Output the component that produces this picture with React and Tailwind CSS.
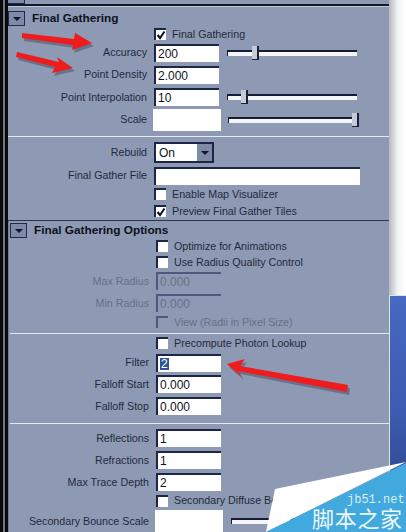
const FONT = { fontFamily: '"Liberation Sans", Arial, sans-serif' };

function Label({ children, dim }) {
  return (
    <span className={`w-[140px] shrink-0 pr-[1px] text-right whitespace-nowrap ${dim ? 'text-[#667088]' : 'text-[#232a3e]'}`}>
      {children}
    </span>
  );
}

function Field({ value, dim, selected, blank, w = 'w-[65px]' }) {
  if (blank) return <div className="w-[68px] h-[22px] -ml-[1px] bg-white shrink-0" />;
  return (
    <div className={`${w} h-[18px] flex items-center pl-[2px] text-[12px] leading-none shrink-0 border-t-2 border-l-2 border-[#1c2748] ${dim ? 'bg-[#8e9ab3] text-[#667088] border-[#4c5a7c]' : 'bg-white text-[#10131c]'}`}>
      {selected ? <span className="bg-[#2f5597] text-white px-[1px]">{value}</span> : value}
    </div>
  );
}

function Slider({ pos, w = 'w-[130px]' }) {
  return (
    <div className={`relative ${w} h-[14px] ml-[8px] shrink-0`}>
      <div className="absolute left-0 right-0 top-[4px] h-[6px] bg-[#f4f5f8] border-t-2 border-l border-[#161d33]" />
      {pos !== undefined && (
        <div className="absolute top-0 w-[7px] h-[14px] bg-[#c6cbd8] border-r-2 border-b border-[#1a2238]" style={{ left: pos }} />
      )}
    </div>
  );
}

function Row({ label, h, dim, children }) {
  return (
    <div className={`flex items-center shrink-0 ${h}`}>
      <Label dim={dim}>{label}</Label>
      <div className="w-[6px] shrink-0" />
      {children}
    </div>
  );
}

function Check({ label, checked, dim, h }) {
  return (
    <div className={`flex items-center shrink-0 ${h}`}>
      <div className="w-[146px] shrink-0" />
      <div className={`w-[12px] h-[12px] flex items-center justify-center border-t-2 border-l-2 shrink-0 ${dim ? 'border-[#4c5a7c] bg-[#8e9ab3]' : 'border-[#1c2748] bg-white'}`}>
        {checked && (
          <svg width="10" height="10" viewBox="0 0 10 10">
            <path d="M1.5 5 L4 8 L8.5 1.5" fill="none" stroke="#0b0f1a" strokeWidth="2" />
          </svg>
        )}
      </div>
      <span className={`ml-[6px] whitespace-nowrap ${dim ? 'text-[#667088]' : 'text-[#232a3e]'}`}>{label}</span>
    </div>
  );
}

function Header({ title }) {
  return (
    <div className="flex items-center shrink-0 h-[15px]">
      <div className="w-[17px] h-[15px] flex items-center justify-center bg-[#7e8aa8] border border-[#222c4a] shrink-0">
        <div className="w-0 h-0 border-l-[4px] border-r-[4px] border-t-[4px] border-l-transparent border-r-transparent border-t-[#111726]" />
      </div>
      <span className="ml-[7px] text-[11.8px] font-bold text-[#0c1120] whitespace-nowrap">{title}</span>
    </div>
  );
}

function Gap({ h }) {
  return <div className={`shrink-0 ${h}`} />;
}

function Line() {
  return <div className="shrink-0 h-[1px] bg-[#e6e9ef]" />;
}

function Arrow({ points }) {
  return (
    <svg className="absolute left-0 top-0" width="406" height="532" viewBox="0 0 406 532">
      <polygon points={points} fill="#3a4258" opacity="0.45" transform="translate(2 3)" />
      <polygon points={points} fill="#ee1c1c" />
    </svg>
  );
}

export default function App() {
  return (
    <div className="relative flex w-[406px] h-[532px] overflow-hidden bg-[#8e9ab3] text-[10.7px] leading-none" style={FONT}>
      <div className="flex w-[8px] shrink-0 bg-black">
        <div className="w-[3px] bg-[#0a0a0a]" />
        <div className="w-[2px] bg-[#6f7688]" />
        <div className="w-[3px] bg-[#0a0a0a]" />
      </div>

      <div className="w-[381px] shrink-0 flex flex-col">
        <div className="h-[4px] flex shrink-0">
          <div className="w-[17px] bg-[#7e8aa8] border-b border-r border-[#222c4a]" />
        </div>
        <div className="h-[2px] shrink-0 bg-[#141a2c]" />
        <div className="h-[1px] shrink-0 bg-[#c3c9d6]" />

        <Gap h="h-[4px]" />
        <Header title="Final Gathering" />
        <Check label="Final Gathering" checked h="h-[16px]" />
        <Row label="Accuracy" h="h-[21px]">
          <Field value="200" />
          <Slider pos={25} />
        </Row>
        <Row label="Point Density" h="h-[23px]"><Field value="2.000" /></Row>
        <Row label="Point Interpolation" h="h-[22px]">
          <Field value="10" />
          <Slider pos={14} />
        </Row>
        <Row label="Scale" h="h-[23px]">
          <Field blank />
          <div className="-ml-[1px]"><Slider pos={124} /></div>
        </Row>
        <Gap h="h-[5px]" />
        <Line />

        <Gap h="h-[5px]" />
        <Row label="Rebuild" h="h-[21px]">
          <div className="w-[60px] h-[21px] flex border-2 border-[#1c2748] shrink-0">
            <div className="flex-1 bg-white flex items-center pl-[3px] text-[#10131c] text-[12px]">On</div>
            <div className="w-[15px] bg-[#7e8aa8] flex items-center justify-center">
              <div className="w-0 h-0 border-l-[4px] border-r-[4px] border-t-[4px] border-l-transparent border-r-transparent border-t-[#111726]" />
            </div>
          </div>
        </Row>
        <Row label="Final Gather File" h="h-[25px]"><Field value="" w="w-[206px]" /></Row>
        <Check label="Enable Map Visualizer" h="h-[12px]" />
        <Gap h="h-[3px]" />
        <Check label="Preview Final Gather Tiles" checked h="h-[16px]" />
        <Gap h="h-[1px]" />
        <div className="h-[1px] shrink-0 bg-[#2a3350]" />

        <div className="pl-[1px] flex flex-col shrink-0 border-l border-[#747f9a]">
          <Gap h="h-[2px]" />
          <Header title="Final Gathering Options" />
          <Check label="Optimize for Animations" h="h-[16px]" />
          <Check label="Use Radius Quality Control" h="h-[16px]" />
          <Row label="Max Radius" dim h="h-[22px]"><Field value="0.000" dim /></Row>
          <Row label="Min Radius" dim h="h-[22px]"><Field value="0.000" dim /></Row>
          <Check label="View (Radii in Pixel Size)" dim h="h-[16px]" />
          <Gap h="h-[3px]" />
          <Line />
          <Check label="Precompute Photon Lookup" h="h-[18px]" />
          <Row label="Filter" h="h-[21px]"><Field value="2" selected /></Row>
          <Row label="Falloff Start" h="h-[22px]"><Field value="0.000" /></Row>
          <Row label="Falloff Stop" h="h-[22px]"><Field value="0.000" /></Row>
          <Gap h="h-[6px]" />
          <Line />
          <Gap h="h-[3px]" />
          <Row label="Reflections" h="h-[22px]"><Field value="1" /></Row>
          <Row label="Refractions" h="h-[22px]"><Field value="1" /></Row>
          <Row label="Max Trace Depth" h="h-[22px]"><Field value="2" /></Row>
          <Check label="Secondary Diffuse Bounces" h="h-[15px]" />
          <Row label="Secondary Bounce Scale" h="h-[26px]">
            <Field blank />
            <Slider />
          </Row>
        </div>
      </div>

      <div className="flex-1 flex flex-col">
        <div className="h-[295px] bg-gradient-to-r from-[#b4b8c2] via-[#f2f3f4] to-white" />
        <div className="flex-1 border-l border-[#dfe3ee] border-t bg-gradient-to-b from-[#4768c0] via-[#3b5cb0] to-[#2c3c80]" />
      </div>

      <Arrow points="22,33 74,39 75,33 92,43 72,50 73,45 22,38" />
      <Arrow points="17,52 59,62 57,57 73,68 52,73 55,67 16,57" />
      <Arrow points="227,364 245,359 240,366 348,385 347,392 238,371 242,377" />

      <svg className="absolute left-0 top-0" width="406" height="532" viewBox="0 0 406 532">
        <polygon points="275,489 406,462 266,532" fill="#ffffff" />
        <polygon points="406,463 406,532 266,532" fill="#41a9de" />
      </svg>
      <span className="absolute left-[347px] top-[494px] text-[12px] leading-none text-[#d8eef9] whitespace-nowrap" style={{ fontFamily: '"Liberation Mono", monospace' }}>jb51.net</span>
      <span className="absolute left-[312px] top-[506px] text-[22px] leading-none tracking-[0.7px] text-[#eef8fd] whitespace-nowrap" style={{ fontFamily: '"Noto Sans CJK SC", sans-serif' }}>脚本之家</span>
    </div>
  );
}
